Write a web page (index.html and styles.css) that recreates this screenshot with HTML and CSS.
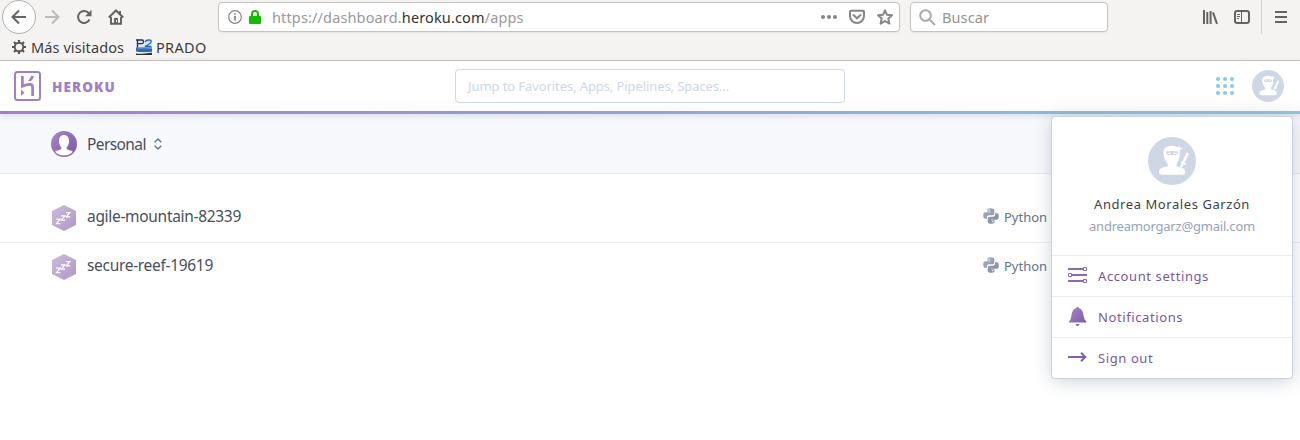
FILE: index.html
```html
<!DOCTYPE html>
<html lang="es">
<head>
<meta charset="utf-8">
<title>Personal apps | Heroku</title>
<link rel="stylesheet" href="styles.css">
</head>
<body>
<svg class="defs" width="0" height="0" aria-hidden="true">
  <defs>
    <linearGradient id="purple" x1="0" y1="0" x2="1" y2="1"><stop offset="0" stop-color="#a886c9"/><stop offset="1" stop-color="#79589f"/></linearGradient>
    <linearGradient id="pale" x1="0" y1="0" x2="1" y2="1"><stop offset="0" stop-color="#cbbbdd"/><stop offset="1" stop-color="#ae98c6"/></linearGradient>
    <linearGradient id="slate" x1="0" y1="0" x2="1" y2="1"><stop offset="0" stop-color="#a5afbf"/><stop offset="1" stop-color="#7f8b9f"/></linearGradient>
    <symbol id="ninja" viewBox="0 0 48 48">
      <circle cx="24" cy="24" r="24" fill="#cfd7e6"/>
      <path fill="#fff" d="M15.500 16C15.500 11 19 8.800 24 8.800Q27.500 8.800 29.500 10.300L32 9.200 31.800 10.800 35 11.300 32.500 12.700 31.200 12.900Q32.800 14 33 15.500L31.500 13.800Q32.500 21 29.500 25Q28.500 26.500 28.500 29C32 30.500 37.300 30.500 37.300 35Q37.300 37.700 34.500 37.700H14Q11 37.700 11 35C11 30.500 16.500 30.500 20 29Q20 26.500 18.500 25Q15.500 21 15.500 16z"/>
      <path fill="#fff" d="M38.500 15.200L41 16.400 36.700 25.700 38 26.600 37.200 28.200 35.600 27.600 34.200 30.500 32 29.400 33.500 26.300 32.500 25.600 33.300 24.200 34.500 24.500z"/>
      <path fill="#cfd7e6" d="M18 14.500Q24 13.600 30 14.500V16Q29 18.700 26.500 18.300L24 17.800 21.500 18.300Q19 18.700 18 16z"/>
      <path fill="#fff" d="M19.500 15.700h3.300v1.300h-3.300zM25.300 15.700h3.300v1.300h-3.300z"/>
    </symbol>
    <symbol id="zzz" viewBox="0 0 26 26">
      <path fill="url(#pale)" d="M13 0l12 6v14l-12 6-12-6V6z"/>
      <path fill="none" stroke="#fff" stroke-width="1.250" d="M5.200 14.200H9L5.500 18.500H9.400M10 10.900H13.800L10.300 15.200H14.200M15 7.600H18.800L15.300 11.900H19.200"/>
    </symbol>
    <symbol id="python" viewBox="0 0 16 16">
      <path fill="url(#slate)" d="M4.500 1.200Q5 .3 7.800.3q3.500 0 3.500 1.800v3.300q0 1.800-1.800 1.800H6Q4 7.200 4 9v1.700H2.200Q.2 10.700.2 7.600q0-3.300 2-3.300h5.600v-.6H4.500zM11.500 15Q11 15.700 8.200 15.700q-3.500 0-3.500-1.800v-3.300q0-1.800 1.800-1.800H10q2 0 2-1.800V5.300h1.800q2 0 2 3.100 0 3.300-2 3.300H8.200v.6h3.300z"/>
      <circle cx="6.200" cy="2.200" r=".7" fill="#fff"/><circle cx="9.800" cy="13.800" r=".7" fill="#fff"/>
    </symbol>
  </defs>
</svg>

<header class="browser">
  <div class="toolbar">
    <div class="nav">
      <span class="back"><svg width="16" height="16" viewBox="0 0 16 16"><path d="M15 8H1.500M8 1.500L1.500 8 8 14.500"/></svg></span>
      <svg class="forward" width="16" height="16" viewBox="0 0 16 16"><path d="M1 8h13.500M8 1.500L14.500 8 8 14.500"/></svg>
      <svg class="reload" width="16" height="16" viewBox="0 0 16 16"><path d="M13.500 10.500A6 6 0 1 1 12.800 4.200"/><path class="solid" d="M15.500 .8v6.400H9.100z"/></svg>
      <svg class="home" width="16" height="16" viewBox="0 0 16 16"><path d="M.8 8.500L8 1.500l7.200 7M3 8v6.800h10V8"/><path class="solid" d="M6 9h4v6H6zM11 2h2v4l-2-2z"/><path d="M8.500 11v2" stroke="#f4f3f1" stroke-width="1"/></svg>
    </div>
    <div class="urlbar">
      <svg class="info" width="14" height="14" viewBox="0 0 14 14"><circle cx="7" cy="7" r="6.300"/><path d="M7 6v4.500M7 3.300v1.500" stroke-width="1.800"/></svg>
      <svg class="lock" width="12" height="14" viewBox="0 0 12 14"><path fill="none" stroke="#12bc00" stroke-width="2" d="M3 7V4a3 3 0 0 1 6 0v3"/><rect y="6" width="12" height="8" rx="1" fill="#12bc00"/></svg>
      <span class="url">https://dashboard.<b>heroku.com</b>/apps</span>
      <span class="page-actions">
        <svg width="16" height="16" viewBox="0 0 16 16"><g class="dots"><circle cx="2" cy="8" r="2"/><circle cx="8" cy="8" r="2"/><circle cx="14" cy="8" r="2"/></g></svg>
        <svg width="16" height="16" viewBox="0 0 16 16"><path d="M2 1.800h12q1 0 1 1V7A7 7 0 0 1 1 7V2.800q0-1 1-1zM4.500 6L8 9.300 11.500 6" stroke-linecap="round"/></svg>
        <svg width="16" height="16" viewBox="0 0 16 16"><path d="M8 1.300l2 4.500 5 .5-3.700 3.300 1.100 5L8 12l-4.400 2.600 1.100-5L1 6.300l5-.5z" stroke-linejoin="round"/></svg>
      </span>
    </div>
    <div class="search">
      <svg width="17" height="17" viewBox="0 0 17 17"><circle cx="6.500" cy="6.500" r="5.300"/><path d="M10.500 10.500l5.500 5.500"/></svg>
      <span>Buscar</span>
    </div>
    <div class="tools">
      <svg width="16" height="16" viewBox="0 0 16 16"><path d="M2 1v14M5.300 3v12M8.600 2v13M11 3.300L15 14.800"/></svg>
      <svg width="16" height="16" viewBox="0 0 16 16"><rect x="1" y="2" width="14" height="12" rx="2.300"/><path d="M7.500 2v12M3 5.500h3M3 7.500h3M3 9.500h2" stroke-width="1"/></svg>
      <i class="separator"></i>
      <svg width="12" height="12" viewBox="0 0 12 12"><path d="M0 1h12M0 6h12M0 11h12"/></svg>
    </div>
  </div>
  <nav class="bookmarks">
    <svg width="14" height="14" viewBox="0 0 14 14"><circle cx="7" cy="7" r="4.300" fill="none" stroke="#55565a" stroke-width="1.900"/><path stroke="#55565a" stroke-width="2.100" d="M7 0v3M7 11v3M0 7h3M11 7h3M2 2l2 2M10 10l2 2M2 12l2-2M10 4l2-2"/></svg>
    <span class="visited">Más visitados</span>
    <svg class="prado-icon" width="16" height="16" viewBox="0 0 16 16"><path fill="#dfe6ef" d="M0 0h16v9H0z"/><path fill="#2d68b0" d="M0 8.500H16V13Q6 14 0 12.500z"/><path fill="#263442" d="M0 14.200Q8 15 16 13.300V16H0z"/><path fill="#fff" d="M0 12.800Q8 14 16 12.700V13.400Q8 15 0 14.200z"/><path fill="none" stroke="#25344a" stroke-width="1.300" d="M0 1H6Q7.500 1 7.500 2.700T6 4.600H1M1.500 1V8.500"/><path fill="none" stroke="#2870b8" stroke-width="1.500" d="M9 3Q10 1 13 1Q15.500 1 15 3Q14 5 9 7.500H15.500"/><path stroke="#5d94cf" d="M1 10Q7 8.500 16 9.500" fill="none"/></svg>
    <span class="prado">PRADO</span>
  </nav>
</header>

<header class="topbar">
  <a class="brand">
    <svg width="27" height="30" viewBox="0 0 27 30"><rect x="1" y="1" width="25" height="28" rx="2.500" fill="none" stroke="#a17fc5" stroke-width="2"/><path fill="#a17fc5" d="M7 18.500l3.500 3.200L7 25zM17 5h3q-.5 2.800-3 5h-3q2.300-2.500 3-5z"/><path fill="none" stroke="#a17fc5" stroke-width="2.700" d="M8.400 5v10.200q4-1.800 7.400-1.800 2.800 0 2.800 2.800V25"/></svg>
    <span>HEROKU</span>
  </a>
  <div class="jump">Jump to Favorites, Apps, Pipelines, Spaces...</div>
  <div class="account">
    <svg width="18" height="18" viewBox="0 0 18 18" fill="#8bc8e8"><circle cx="2" cy="2" r="2"/><circle cx="9" cy="2" r="2"/><circle cx="16" cy="2" r="2"/><circle cx="2" cy="9" r="2"/><circle cx="9" cy="9" r="2"/><circle cx="16" cy="9" r="2"/><circle cx="2" cy="16" r="2"/><circle cx="9" cy="16" r="2"/><circle cx="16" cy="16" r="2"/></svg>
    <svg class="avatar-small" width="32" height="32"><use href="#ninja"/></svg>
  </div>
</header>

<section class="context">
  <svg width="26" height="26" viewBox="0 0 26 26"><circle cx="13" cy="13" r="13" fill="url(#purple)"/><path fill="#fff" d="M13 4c3.200 0 5 2.300 5 6 0 2.800-1 5-2.300 6.300v1.500c0 1.300 5.300 1.300 6.100 3.200Q18 24.500 13 24.500T4.200 21c.8-1.900 6.100-1.900 6.100-3.200v-1.500C9 15 8 12.800 8 10c0-3.700 1.800-6 5-6z"/></svg>
  <span class="team">Personal</span>
  <svg width="8" height="12" viewBox="0 0 8 12"><path fill="none" stroke="#62728d" stroke-width="1.400" d="M.7 4.200L4 1l3.300 3.200M.7 7.800L4 11l3.300-3.200"/></svg>
</section>

<main class="apps">
  <div class="app">
    <svg width="26" height="26"><use href="#zzz"/></svg>
    <span class="name">agile-mountain-82339</span>
    <span class="stack"><svg width="16" height="16"><use href="#python"/></svg><span>Python</span></span>
  </div>
  <div class="app">
    <svg width="26" height="26"><use href="#zzz"/></svg>
    <span class="name">secure-reef-19619</span>
    <span class="stack"><svg width="16" height="16"><use href="#python"/></svg><span>Python</span></span>
  </div>
</main>

<aside class="menu">
  <div class="profile">
    <svg width="48" height="48"><use href="#ninja"/></svg>
    <span class="person">Andrea Morales Garzón</span>
    <span class="email">andreamorgarz@gmail.com</span>
  </div>
  <a class="item"><svg class="sliders" width="20" height="16" viewBox="0 0 20 16" fill="none" stroke="#8d69b2"><path stroke-width="2" d="M0 2h15.500M4 8h15M0 14h15.500"/><path d="M15.500.5h3v3h-3zM.5 6.500h3v3h-3zM15.500 12.500h3v3h-3z"/></svg><span>Account settings</span></a>
  <a class="item"><svg width="20" height="20" viewBox="0 0 20 20"><path fill="url(#purple)" d="M9.500 0q1.200 0 1.500 1.300c5 1.700 4 7.700 5.500 10.700q.5 1.500 1.800 2.300V15.500H1v-1.200q1.200-.8 1.600-2.300C4 9 3 3 8 1.300Q8.300 0 9.500 0zM7.500 17h4q-.5 2-2 2t-2-2z"/></svg><span>Notifications</span></a>
  <a class="item"><svg width="20" height="12" viewBox="0 0 20 12"><path fill="none" stroke="#8460aa" stroke-width="2" d="M0 5h18M13 .8L17.300 5 13 9.200"/></svg><span>Sign out</span></a>
</aside>
</body>
</html>
```
FILE: styles.css
```css
* { box-sizing: border-box; }
body { margin: 0; height: 440px; overflow: hidden; position: relative; background: #fff; font-family: "Noto Sans", "Open Sans", sans-serif; color: #474f5c; }
svg { display: block; flex: none; }
span { white-space: nowrap; }
.defs { position: absolute; }

.browser { height: 61px; background: #f4f3f1; border-bottom: 1px solid #c5c1bd; color: #3d3d3d; }
.toolbar { height: 34px; display: flex; align-items: center; padding-left: 2px; }
.toolbar svg { fill: none; stroke: #646464; stroke-width: 2; }
.nav { width: 216px; display: flex; align-items: center; }
.back { width: 34px; height: 34px; border: 1px solid #b2b0ad; border-radius: 50%; background: #fcfcfc; display: grid; place-items: center; }
.nav .forward { margin-left: 8px; stroke: #bcbbb9; }
.nav .reload, .nav .home { margin-left: 16px; }
.toolbar .solid { fill: #646464; stroke: none; }
.urlbar, .search { height: 30px; background: #fff; border: 1px solid #c6c4c1; border-radius: 4px; display: flex; align-items: center; box-shadow: 0 1px 2px #0000000d; }
.urlbar { width: 682px; padding: 0 6px 0 9px; }
.toolbar .info { stroke: #858585; stroke-width: 1.2; }
.toolbar .lock { margin-left: 7px; stroke: none; }
.url { margin-left: 11px; font-size: 14.5px; letter-spacing: .14px; color: #999; }
.url b { font-weight: 400; color: #333; }
.page-actions { margin-left: auto; display: flex; gap: 12px; }
.toolbar .page-actions svg { stroke: #858585; }
.toolbar .page-actions .dots { fill: #858585; stroke: none; }
.search { width: 198px; margin-left: 10px; padding-left: 8px; gap: 6px; font-size: 14.5px; letter-spacing: .1px; color: #949494; }
.toolbar .search svg { stroke: #aaa; }
.tools { margin-left: 94px; display: flex; align-items: center; }
.tools svg + svg { margin-left: 16px; }
.separator { width: 1px; height: 34px; background: #d3d1cf; margin-left: 11px; }
.toolbar .separator + svg { margin-left: 13px; }
.bookmarks { height: 26px; padding: 0 0 0 12px; display: flex; align-items: center; font-size: 14.5px; letter-spacing: .1px; }
.visited, .prado { margin-top: -1px; }
.visited { margin-left: 5px; width: 93px; }
.prado-icon { margin-left: 12px; }
.prado { margin-left: 4px; letter-spacing: .35px; }

.topbar { height: 53px; display: flex; align-items: center; padding: 0 16px 3px 14px; background: linear-gradient(90deg, #a17fc5, #8bc8e0) bottom / 100% 3px no-repeat, linear-gradient(#fff 60%, #fbfbfc); position: relative; box-shadow: 0 2px 6px #66728a33; }
.brand { width: 441px; display: flex; align-items: center; gap: 11px; color: #a17fc5; font: 800 13.5px "Open Sans", sans-serif; letter-spacing: 1.1px; }
.brand span { margin-top: 2px; }
.jump { width: 390px; height: 34px; border: 1px solid #cfd7e6; border-radius: 4px; padding-left: 12px; line-height: 32px; font-size: 13px; letter-spacing: -.09px; color: #cfd7e6; background: #fff; }
.account { margin-left: auto; display: flex; align-items: center; gap: 18px; }

.context { height: 60px; background: #f7f8fc; border-bottom: 1px solid #e4e8f1; padding-left: 51px; display: flex; align-items: center; }
.team { margin-left: 10px; width: 59px; font-size: 15.5px; letter-spacing: -.6px; }
.team + svg { margin-left: 8px; }
.apps { padding-top: 20px; }
.app { height: 49px; display: flex; align-items: center; padding-left: 51px; border-bottom: 1px solid #e9edf4; }
.app:last-child { height: 48px; border: 0; }
.name { margin: -5px 0 0 10px; width: 896px; font-size: 15.5px; letter-spacing: -.31px; }
.stack { display: flex; align-items: center; gap: 5px; font-size: 13px; color: #62728d; margin-top: -5px; }
.stack span { margin-top: 2px; }

.menu { position: absolute; left: 1052px; top: 117px; width: 240px; height: 261px; background: #fff; border-radius: 3px; box-shadow: 0 0 0 1px #cbd2df, 0 3px 18px #40506b45; color: #79589f; font-size: 13px; letter-spacing: .6px; }
.profile { height: 138px; padding-top: 20px; display: flex; flex-direction: column; align-items: center; }
.person { margin-top: 9px; line-height: 20px; letter-spacing: .57px; color: #3f3f44; }
.email { margin-top: 2px; line-height: 20px; letter-spacing: -.2px; color: #96a3b8; }
.item { height: 41px; border-top: 1px solid #e9ecf3; padding-left: 16px; display: flex; align-items: center; gap: 10px; }
.sliders { margin-top: -2px; }
```
